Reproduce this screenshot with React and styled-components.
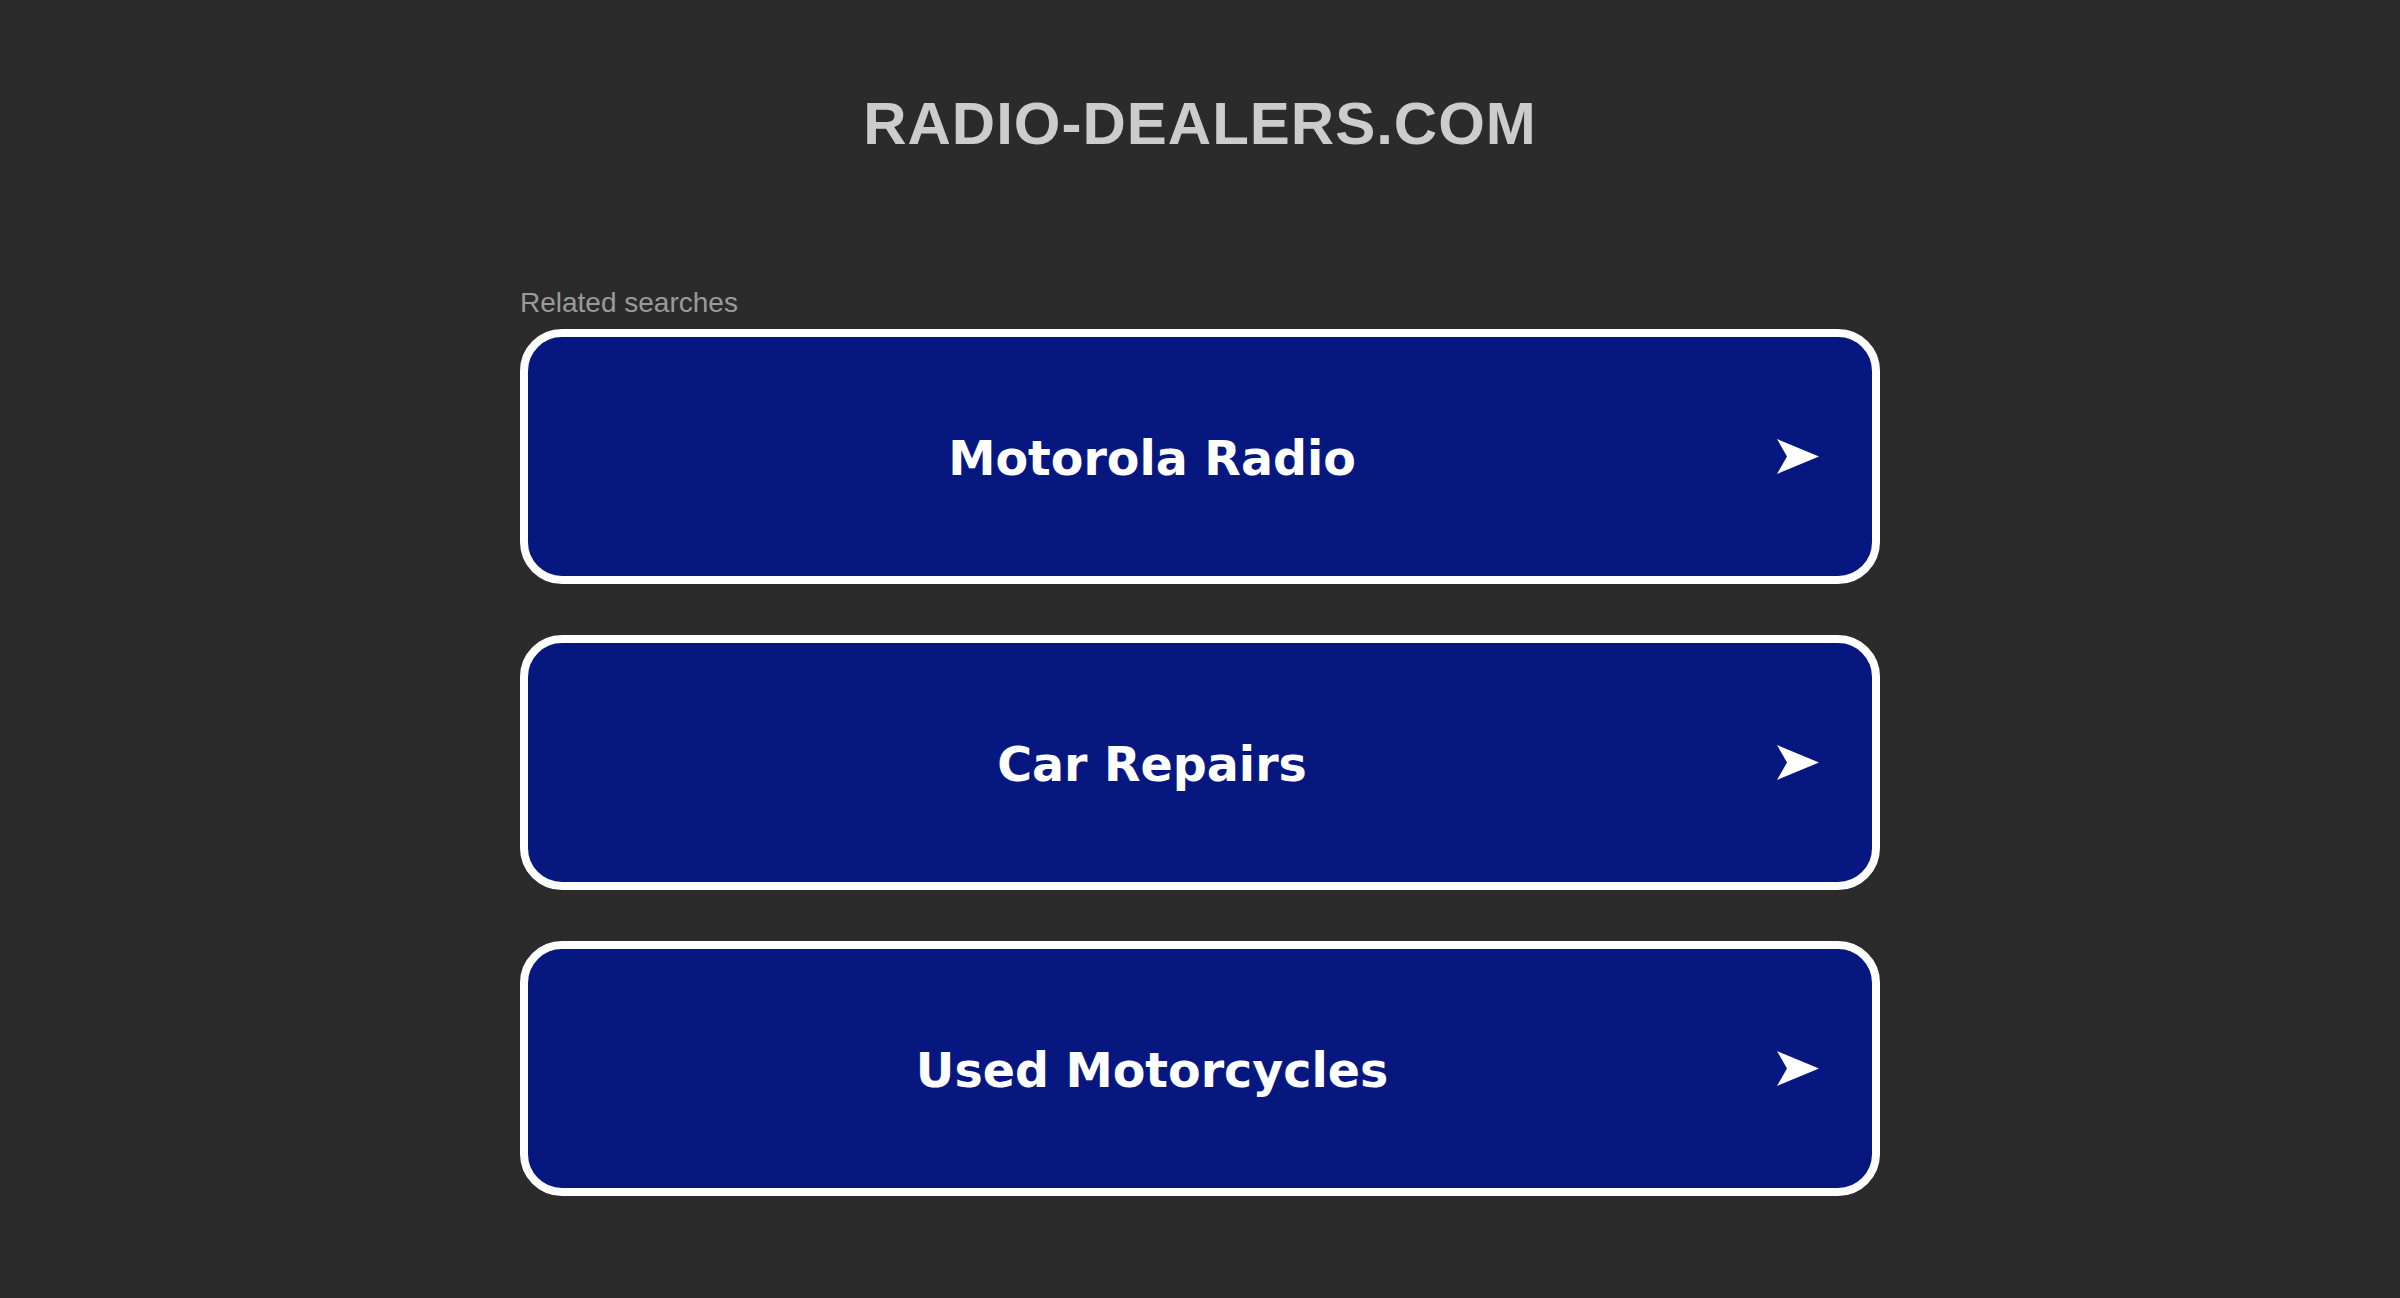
import React from 'react'
import styled, { createGlobalStyle } from 'styled-components'

const GlobalStyle = createGlobalStyle`
  html, body {
    margin: 0;
    padding: 0;
    background: #2b2b2b;
  }
`

const Page = styled.div`
  width: 1360px;
  margin: 0 auto;
  padding-top: 94px;
  font-family: "Liberation Sans", Arial, sans-serif;
`

const Title = styled.h1`
  margin: 0;
  font-size: 60px;
  line-height: 60px;
  font-weight: 700;
  letter-spacing: 1px;
  text-align: center;
  color: #cccccc;
`

const Related = styled.div`
  margin-top: 135px;
  font-size: 28px;
  line-height: 28px;
  color: #9a9a9a;
`

const List = styled.div`
  display: flex;
  flex-direction: column;
  gap: 51px;
  margin-top: 12px;
`

const SearchLink = styled.a`
  box-sizing: border-box;
  display: flex;
  align-items: center;
  height: 255px;
  padding: 0 53px;
  border: 8px solid #ffffff;
  border-radius: 42px;
  background: #061880;
  color: #ffffff;
  text-decoration: none;
  cursor: pointer;
`

const Label = styled.span`
  flex: 1;
  padding-top: 3px;
  text-align: center;
  font-family: "DejaVu Sans", Verdana, sans-serif;
  font-weight: 700;
  font-size: 47.5px;
`

const Arrow = styled.svg`
  flex: none;
  margin-left: 54px;
  width: 42px;
  height: 35px;
`

const items = ['Motorola Radio', 'Car Repairs', 'Used Motorcycles']

export default function App() {
  return (
    <>
      <GlobalStyle />
      <Page>
        <Title>RADIO-DEALERS.COM</Title>
        <Related>Related searches</Related>
        <List>
          {items.map((item) => (
            <SearchLink key={item} href="#">
              <Label>{item}</Label>
              <Arrow viewBox="0 0 42 35">
                <polygon points="0,0 42,17.5 0,35 10,17.5" fill="#ffffff" />
              </Arrow>
            </SearchLink>
          ))}
        </List>
      </Page>
    </>
  )
}
